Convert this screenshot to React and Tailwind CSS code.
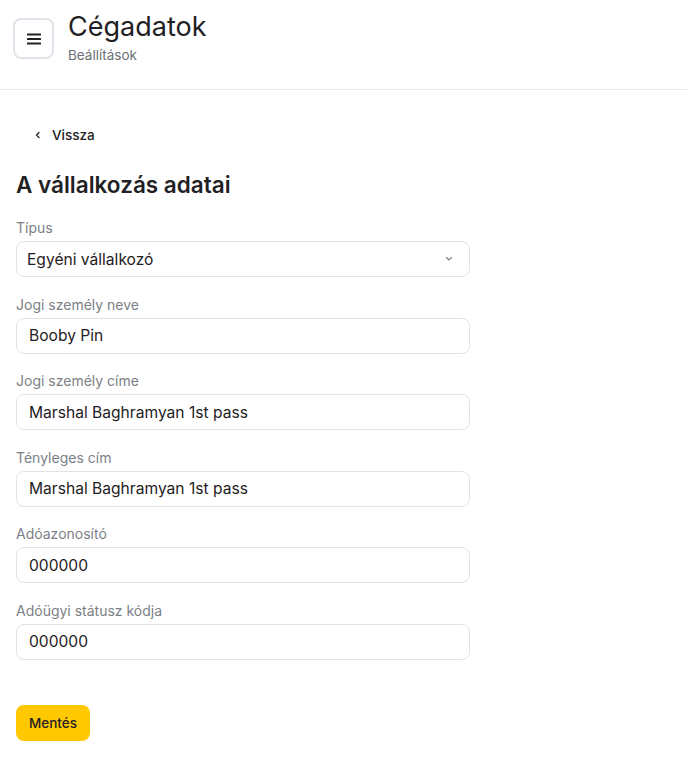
import React from "react";

function Field({ label, value }) {
  return (
    <div className="flex flex-col">
      <label className="text-[14px] leading-[20px] text-[#7b7f86] mb-[3px]">{label}</label>
      <div className="h-[36px] w-full rounded-[8px] border border-[#e2e3e8] bg-white flex items-center px-[12px] text-[15.6px] text-[#1f2124]">
        {value}
      </div>
    </div>
  );
}

export default function App() {
  return (
    <div className="min-h-[763px] bg-white" style={{ fontFamily: "Inter, 'Noto Sans', sans-serif" }}>
      <header className="h-[90px] border-b border-[#e9eaec] flex items-start px-[13px] pt-[18px] gap-[14px]">
        <button className="w-[41px] h-[41px] rounded-[8px] border-2 border-[#e1e3ea] flex items-center justify-center bg-white">
          <svg width="14" height="12" viewBox="0 0 14 12">
            <rect x="0" y="0.5" width="14" height="2" rx="0.5" fill="#222" />
            <rect x="0" y="5" width="14" height="2" rx="0.5" fill="#222" />
            <rect x="0" y="9.5" width="14" height="2" rx="0.5" fill="#222" />
          </svg>
        </button>
        <div className="flex flex-col -mt-[10px]">
          <h1 className="text-[27px] leading-[38px] text-[#1f2124] font-normal">Cégadatok</h1>
          <div className="text-[13.5px] leading-[18px] text-[#6b7078]">Beállítások</div>
        </div>
      </header>
      <main className="px-[16px] pt-[35px]">
        <button className="flex items-center gap-[10px] pl-[18px] text-[13.5px] font-medium text-[#1f2124]">
          <svg width="8" height="8" viewBox="0 0 8 8">
            <path d="M5 1.5 L2.5 4 L5 6.5" stroke="#222" strokeWidth="1.3" fill="none" strokeLinecap="round" strokeLinejoin="round" />
          </svg>
          <span>Vissza</span>
        </button>
        <h2 className="mt-[25px] text-[22.5px] leading-[30px] font-semibold text-[#1f2124]">A vállalkozás adatai</h2>
        <div className="w-[454px] mt-[18px] flex flex-col gap-[17.5px]">
          <div className="flex flex-col">
            <label className="text-[14px] leading-[20px] text-[#7b7f86] mb-[3px]">Típus</label>
            <div className="h-[36px] w-full rounded-[8px] border border-[#e2e3e8] bg-white flex items-center justify-between pl-[10px] pr-[16px] text-[15.6px] text-[#1f2124]">
              <span>Egyéni vállalkozó</span>
              <svg width="8" height="6" viewBox="0 0 8 6">
                <path d="M1.5 1.5 L4 4 L6.5 1.5" stroke="#7a7d85" strokeWidth="1.1" fill="none" strokeLinecap="round" strokeLinejoin="round" />
              </svg>
            </div>
          </div>
          <Field label="Jogi személy neve" value="Booby Pin" />
          <Field label="Jogi személy címe" value="Marshal Baghramyan 1st pass" />
          <Field label="Tényleges cím" value="Marshal Baghramyan 1st pass" />
          <Field label="Adóazonosító" value="000000" />
          <Field label="Adóügyi státusz kódja" value="000000" />
        </div>
        <button className="mt-[45px] h-[36px] px-[13px] rounded-[8px] bg-[#ffc800] text-[13.5px] font-medium text-[#1f2124]">
          Mentés
        </button>
      </main>
    </div>
  );
}
